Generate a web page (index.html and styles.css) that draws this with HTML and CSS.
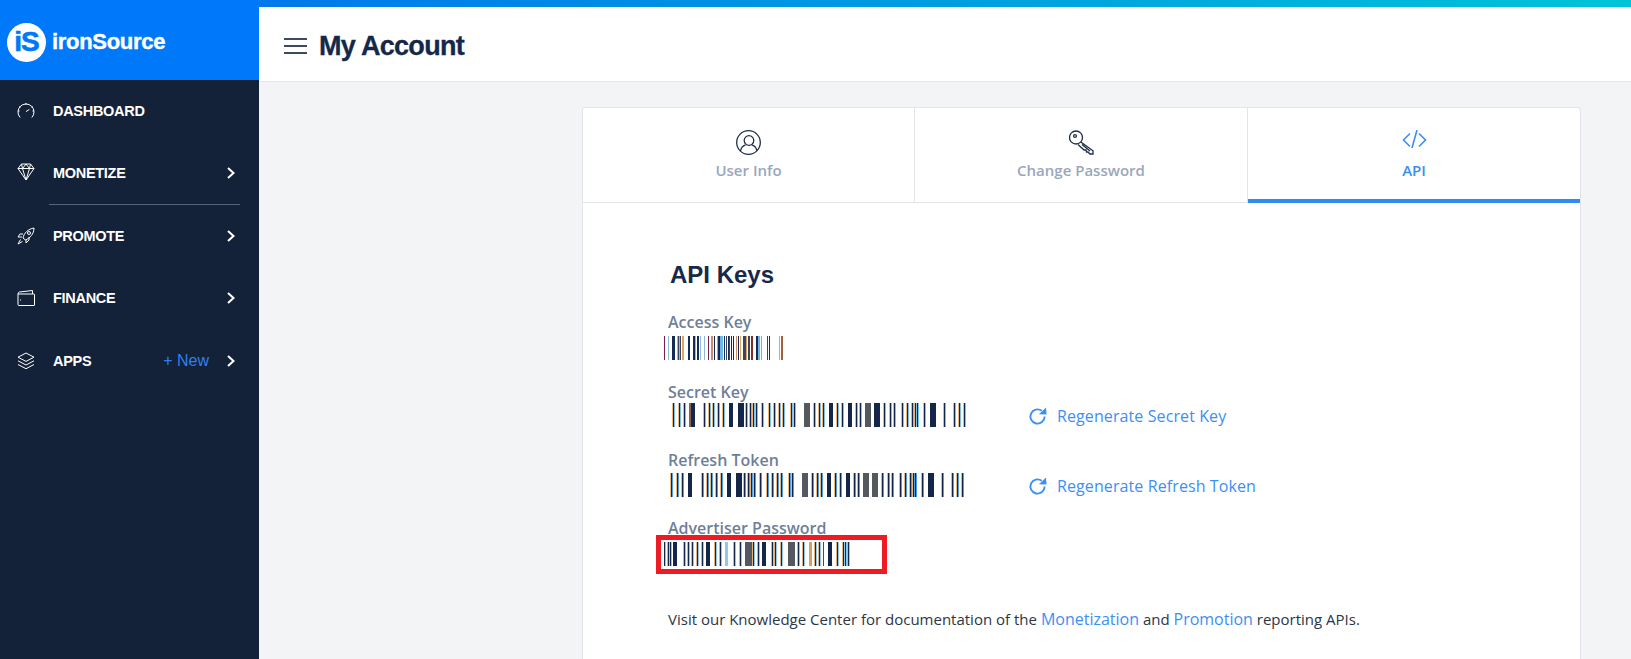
FILE: index.html
```html
<!DOCTYPE html>
<html lang="en">
<head>
<meta charset="utf-8">
<title>My Account</title>
<link rel="stylesheet" href="styles.css">
</head>
<body>
<svg class="defs" width="0" height="0">
  <defs>
    <path id="key-thin" d="M1 0v24M7 0v24M12 0v24M32 0v24M37 0v24M41 0v24M46 0v24M51 0v24M74 0v24M78 0v24M81 0v24M84 0v24M90 0v24M97 0v24M102 0v24M107 0v24M111 0v24M119 0v24M122 0v24M142 0v24M147 0v24M151 0v24M165 0v24M170 0v24M184 0v24M188 0v24M212 0v24M218 0v24M222 0v24M230 0v24M235 0v24M240 0v24M243 0v24M245 0v24M252 0v24M272 0v24M282 0v24M287 0v24M292 0v24"/>
    <path id="pass-thin" d="M0 0v24M4 0v24M6 0v24M20 0v24M24 0v24M28 0v24M33 0v24M38 0v24M51 0v24M56 0v24M70 0v24M76 0v24M89 0v24M94 0v24M108 0v24M111 0v24M117 0v24M134 0v24M139 0v24M151 0v24M155 0v24M173 0v24M179 0v24M181 0v24M184 0v24"/>
  </defs>
</svg>
<div class="app">
  <aside class="sidebar">
    <div class="brand">
      <span class="logo-mark"><span class="logo-i">i</span><span class="logo-s">S</span></span>
      <span class="brand-name">ironSource</span>
    </div>
    <nav class="nav">
      <a class="nav-item">
        <svg class="nav-icon" viewBox="0 0 18 18"><path d="M3.200 15.500A8 8 0 1 1 14.800 15.500M9 9.600l3.400-2.200M9 1v1.600M2.500 4.500l1 .8M15.500 4.500l-1 .8M1 9h1.500M17 9h-1.500"/></svg>
        <span class="nav-label">DASHBOARD</span>
      </a>
      <a class="nav-item">
        <svg class="nav-icon tall" viewBox="0 0 18 18"><path d="M4.500 1h9L17 5.500 9 17 1 5.500zM1 5.500h16M5.500 5.500 9 17 12.500 5.500M4.500 1 5.500 5.500 9 1 12.500 5.500 13.500 1"/></svg>
        <span class="nav-label">MONETIZE</span>
        <svg class="chev" viewBox="0 0 10 14"><path d="M2 2l5.500 5L2 12"/></svg>
      </a>
      <div class="nav-sep"></div>
      <a class="nav-item">
        <svg class="nav-icon" viewBox="0 0 18 18"><path d="M6 11C7 6 11 2 17 1c0 6-4 10-8.500 12zM6 7H3L1 10h4M12 10v3l-3 3v-3.500M3.500 12.500 1 17l4.500-2.500"/><circle cx="12" cy="6" r="1.500"/></svg>
        <span class="nav-label">PROMOTE</span>
        <svg class="chev" viewBox="0 0 10 14"><path d="M2 2l5.500 5L2 12"/></svg>
      </a>
      <a class="nav-item">
        <svg class="nav-icon" viewBox="0 0 18 18"><path d="M1 5v10.500a1 1 0 0 0 1 1h15a.5.500 0 0 0 .5-.5V5.500a.5.500 0 0 0-.5-.5H1zM1 5a2 2 0 0 1 1.500-2L15.500 1.500V5M3 11h1"/></svg>
        <span class="nav-label">FINANCE</span>
        <svg class="chev" viewBox="0 0 10 14"><path d="M2 2l5.500 5L2 12"/></svg>
      </a>
      <a class="nav-item nudge">
        <svg class="nav-icon" viewBox="0 0 18 18"><path d="M9 1l8 4.200-8 4.200-8-4.200zM1 8.800 9 13l8-4.200M1 12.500l8 4.200 8-4.200"/></svg>
        <span class="nav-label">APPS</span>
        <span class="nav-new">+ New</span>
        <svg class="chev" viewBox="0 0 10 14"><path d="M2 2l5.500 5L2 12"/></svg>
      </a>
    </nav>
  </aside>
  <div class="main">
    <header class="topbar">
      <span class="burger"><i></i><i></i><i></i></span>
      <h1 class="page-title">My Account</h1>
    </header>
    <section class="content">
      <div class="card">
        <div class="tabs">
          <div class="tab">
            <svg class="tab-icon" viewBox="0 0 25 25"><circle cx="12.500" cy="12.500" r="11.800"/><circle cx="13" cy="10.500" r="4.800"/><path d="M4.500 21c.5-3 2.500-5.300 5-6.200M21 21c-.5-3-2.500-5.300-5-6.200"/></svg>
            <span>User Info</span>
          </div>
          <div class="tab">
            <svg class="tab-icon" viewBox="0 0 25 25"><circle cx="7" cy="7.500" r="6.500"/><circle cx="6" cy="6" r="1.400"/><path d="M11.800 12 24 20.800V24h-3l-2-2h-1.500l-.5-2h-2l-6-5.500M13 14.500l8 6.500"/></svg>
            <span>Change Password</span>
          </div>
          <div class="tab active">
            <svg class="tab-icon code" viewBox="0 0 25 25"><path d="M8 3.500 1.500 10 8 16.500M17 3.500 23.500 10 17 16.500M15 0 10 18"/></svg>
            <span>API</span>
          </div>
        </div>
        <div class="panel">
          <h2 class="panel-title">API Keys</h2>

          <div class="field">
            <div class="field-label">Access Key</div>
            <svg class="bars" width="120" height="24" viewBox="0 0 120 24">
              <path stroke="#7d1d4b" d="M0 0v24M44 0v24"/>
              <path stroke="#8dbbd8" d="M4 0v24M36 0v24M40 0v24M31 0v24"/>
              <path stroke="#152a55" d="M8 0v24M9 0v24M10 0v24M24 0v24M25 0v24M29 0v24M30 0v24M33 0v24M34 0v24M50 0v24M54 0v24M55 0v24M60 0v24M64 0v24M67 0v24M69 0v24M74 0v24M92 0v24M93 0v24M105 0v24"/>
              <path stroke="#e3a45f" d="M13 0v24M15 0v24M18 0v24M19 0v24M76 0v24M82 0v24M115 0v24"/>
              <path stroke="#3a4560" d="M14 0v24M16 0v24M62 0v24M65 0v24M79 0v24M80 0v24M81 0v24M84 0v24M85 0v24"/>
              <path stroke="#c69068" d="M47 0v24M48 0v24M72 0v24"/>
              <path stroke="#6eb7ea" d="M53 0v24M56 0v24M57 0v24M58 0v24M94 0v24M95 0v24M97 0v24"/>
              <path stroke="#7d2f28" d="M87 0v24M88 0v24M103 0v24"/>
              <path stroke="#a4603a" d="M117 0v24M118 0v24"/>
            </svg>
          </div>

          <div class="field action-row gap-a">
            <div class="field-main">
              <div class="field-label">Secret Key</div>
              <svg class="bars" width="294" height="24" viewBox="0 0 294 24">
                <use href="#key-thin" x="-1" stroke="#eab67c"/>
                <use href="#key-thin" x="1" stroke="#7cc0ee"/>
                <use href="#key-thin" stroke="#12244a"/>
                <path stroke="#8a5f4a" stroke-width="2" d="M18 0v24"/>
                <path stroke="#14264a" stroke-width="4" d="M21 0v24M59 0v24M159 0v24M178 0v24"/>
                <path stroke="#14264a" stroke-width="6" d="M69 0v24M205 0v24M261 0v24"/>
                <path stroke="#55585f" stroke-width="6" d="M135 0v24M196 0v24"/>
              </svg>
            </div>
            <a class="regen">
              <svg class="regen-icon" viewBox="0 0 20 20"><path d="M17.500 10a7.500 7.500 0 1 1-3-6"/><path class="fill" d="M11.500 7.500 19.500 8 19 .5z"/></svg>
              <span>Regenerate Secret Key</span>
            </a>
          </div>

          <div class="field action-row gap-b">
            <div class="field-main">
              <div class="field-label">Refresh Token</div>
              <svg class="bars" width="294" height="24" viewBox="0 0 294 24">
                <use href="#key-thin" x="-1" stroke="#eab67c"/>
                <use href="#key-thin" x="1" stroke="#4a9fe6"/>
                <use href="#key-thin" stroke="#12244a"/>
                <path stroke="#14264a" stroke-width="4" d="M20 0v24M59 0v24M159 0v24M178 0v24"/>
                <path stroke="#14264a" stroke-width="6" d="M69 0v24M261 0v24"/>
                <path stroke="#55585f" stroke-width="6" d="M135 0v24M196 0v24M205 0v24"/>
              </svg>
            </div>
            <a class="regen">
              <svg class="regen-icon" viewBox="0 0 20 20"><path d="M17.500 10a7.500 7.500 0 1 1-3-6"/><path class="fill" d="M11.500 7.500 19.500 8 19 .5z"/></svg>
              <span>Regenerate Refresh Token</span>
            </a>
          </div>

          <div class="field gap-c">
            <div class="field-label">Advertiser Password</div>
            <div class="highlighted">
              <svg class="bars" width="188" height="24" viewBox="0 0 188 24">
                <use href="#pass-thin" x="-1" stroke="#e3b07c"/>
                <use href="#pass-thin" x="1" stroke="#8ccaf2"/>
                <use href="#pass-thin" stroke="#14264a"/>
                <path stroke="#14264a" stroke-width="4" d="M11 0v24M44 0v24M100 0v24M166 0v24"/>
                <path stroke="#8ccaf2" stroke-width="3" d="M62 0v24"/>
                <path stroke="#55585f" stroke-width="7" d="M84 0v24M127 0v24"/>
                <path stroke="#d5a066" stroke-width="3" d="M146 0v24"/>
                <path stroke="#8b2d4a" d="M159 0v24"/>
              </svg>
            </div>
          </div>

          <p class="docs">Visit our Knowledge Center for documentation of the <a>Monetization</a> and <a>Promotion</a> reporting APIs.</p>
        </div>
      </div>
    </section>
  </div>
</div>
</body>
</html>
```

FILE: styles.css
```css
* { box-sizing: border-box; }
html, body { margin: 0; height: 100%; overflow: hidden; }
body { font-family: "Open Sans", sans-serif; background: #f3f4f6; }

.defs { display: block; height: 0; }
.app { display: flex; height: 659px; }

.sidebar { width: 259px; flex: none; background: #132238; color: #fff; }
.brand { height: 80px; background: #0078fa; display: flex; align-items: center; padding: 4px 0 0 7px; gap: 6px; }
.logo-mark { width: 39px; height: 39px; border-radius: 50%; background: #fff; color: #0078fa; display: flex; align-items: center; justify-content: center; font: 700 28px/1 "Liberation Sans", sans-serif; letter-spacing: -1px; -webkit-text-stroke: .6px #0078fa; }
.brand-name { font: 700 22px/1 "Liberation Sans", sans-serif; letter-spacing: -.3px; color: #fff; -webkit-text-stroke: .4px #fff; }

.nav-item { display: flex; align-items: center; height: 62px; padding: 0 23px 0 17px; }
.nav-item.nudge { margin-top: 1px; }
.nav-icon { width: 18px; height: 18px; flex: none; margin-right: 18px; fill: none; stroke: #fff; stroke-width: 1; }
.nav-icon.tall { margin-top: -3px; }
.nav-label { flex: 1; font: 700 14.500px/1 "Liberation Sans", sans-serif; letter-spacing: -.3px; color: #fff; }
.nav-new { font: 400 16px/1 "Liberation Sans", sans-serif; color: #2f80ed; margin-right: 17px; }
.chev { width: 10px; height: 14px; fill: none; stroke: #fff; stroke-width: 2; flex: none; }
.nav-sep { height: 1px; margin: 0 19px 0 49px; background: #56647a; }

.main { flex: 1; display: flex; flex-direction: column; min-width: 0; }
.topbar { height: 82px; flex: none; background: #fff; border-top: 7px solid; border-image: linear-gradient(90deg, #0078ea, #00c4d8) 1; border-bottom: 0; box-shadow: inset 0 -1px 0 #e3e5ea; display: flex; align-items: center; padding: 3px 0 0 25px; }
.burger { display: flex; flex-direction: column; gap: 5px; width: 23px; margin-right: 12px; }
.burger i { display: block; height: 2px; background: #3a4a62; }
.page-title { margin: 0; font: 700 27px/1 "Liberation Sans", sans-serif; letter-spacing: -.7px; color: #14284a; -webkit-text-stroke: .3px #14284a; }

.content { flex: 1; padding: 25px 50px 0 323px; }
.card { background: #fff; border: 1px solid #e3e5ea; border-bottom: 0; border-radius: 3px 3px 0 0; height: 560px; }
.tabs { display: flex; height: 95px; border-bottom: 1px solid #e3e5ea; }
.tab { flex: 1; display: flex; flex-direction: column; align-items: center; padding-top: 22px; border-left: 1px solid #e3e5ea; font-size: 15px; font-weight: 600; line-height: 20px; color: #9aa7bb; }
.tab:first-child { flex: 0 0 331px; border-left: 0; }
.tab span { margin-top: 5px; }
.tab-icon { width: 25px; height: 25px; fill: none; stroke: #1e2f4b; stroke-width: 1.300; }
.tab.active { color: #3a8ff0; box-shadow: inset 0 -4px 0 #2f8cf0; height: 95px; }
.tab-icon.code { stroke: #3a8ff0; stroke-width: 1.600; }

.panel { padding: 57px 0 0 85px; }
.panel-title { margin: 0 0 22px 2px; font: 700 24px/30px "Liberation Sans", sans-serif; color: #16294a; }
.field-label { font-size: 16px; font-weight: 600; line-height: 20px; color: #6f7f98; }
.bars { display: block; fill: none; stroke-width: 1; margin-left: -4px; margin-top: 4px; shape-rendering: crispEdges; }

.action-row { display: flex; align-items: flex-end; }
.field-main { width: 346px; flex: none; }
.gap-a { margin-top: 22px; }
.gap-a .bars { margin-left: 4px; margin-top: 1px; }
.gap-b { margin-top: 23px; }
.gap-b .bars { margin-left: 2px; margin-top: 3px; }
.gap-c { margin-top: 21px; }

.regen { display: flex; align-items: center; gap: 10px; color: #3d8ff5; font-size: 16px; letter-spacing: .1px; line-height: 22px; margin-left: 14px; }
.regen-icon { width: 19px; height: 19px; fill: none; stroke: #3d8ff5; stroke-width: 2; }
.regen-icon .fill { fill: #3d8ff5; stroke: none; }

.highlighted { position: relative; margin-top: 4px; }
.highlighted .bars { margin-top: 0; }
.highlighted::after { content: ""; box-sizing: border-box; position: absolute; left: -12px; top: -7px; width: 231px; height: 39px; border: 5px solid #ed1c24; }

.docs { margin: 41px 0 0; font-size: 15px; line-height: 24px; color: #2c3645; }
.docs a { font-size: 16px; color: #3d8ff5; }
```
